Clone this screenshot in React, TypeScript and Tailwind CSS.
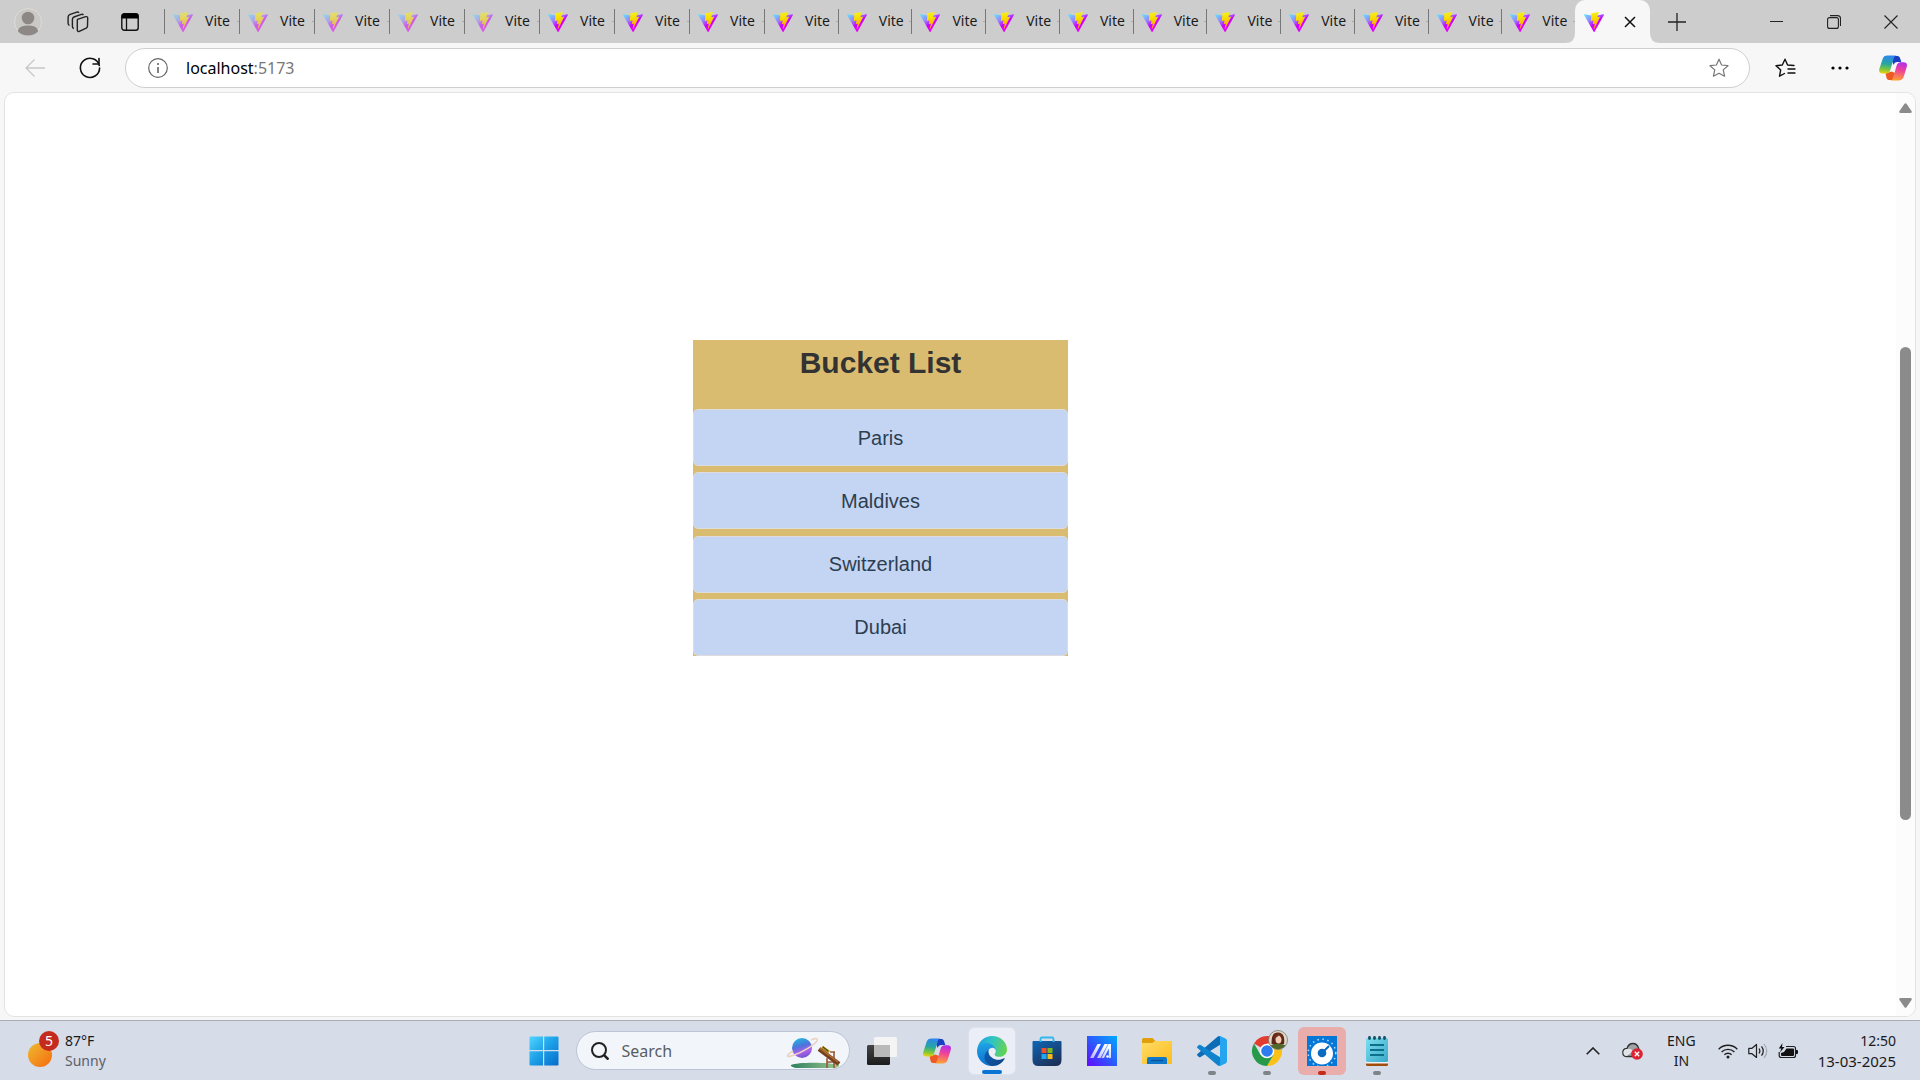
import React from "react";

function ViteLogo({ faded = false }: { faded?: boolean }) {
  return (
    <svg viewBox="0 0 256 257" className={faded ? "size-5 shrink-0 opacity-55" : "size-5 shrink-0"} aria-hidden="true">
      <path fill="url(#viteBase)" d="M255.153 37.938L134.897 252.976c-2.483 4.44-8.862 4.466-11.382.048L.875 37.958c-2.746-4.814 1.371-10.646 6.827-9.67l120.385 21.517a6.537 6.537 0 0 0 2.322-.004l117.867-21.483c5.438-.991 9.574 4.796 6.877 9.62Z" />
      <path fill="url(#viteBolt)" d="M185.432.063L96.44 17.501a3.268 3.268 0 0 0-2.634 3.014l-5.474 92.456a3.268 3.268 0 0 0 3.997 3.378l24.777-5.718c2.318-.535 4.413 1.507 3.936 3.838l-7.361 36.047c-.495 2.426 1.782 4.5 4.151 3.78l15.304-4.649c2.372-.72 4.652 1.36 4.15 3.788l-11.698 56.621c-.732 3.542 3.979 5.473 5.943 2.437l1.313-2.028l72.516-144.72c1.215-2.423-.88-5.186-3.54-4.672l-25.505 4.922c-2.396.462-4.435-1.77-3.759-4.114l16.646-57.705c.677-2.35-1.37-4.583-3.769-4.113Z" />
    </svg>
  );
}

function SharedGradients() {
  return (
    <svg className="absolute size-0" aria-hidden="true">
      <defs>
        <linearGradient id="viteBase" x1="0" x2=".55" y1=".05" y2=".7">
          <stop offset="0" stopColor="#5fe4ff" />
          <stop offset=".5" stopColor="#9a80ff" />
          <stop offset=".85" stopColor="#c800ff" />
          <stop offset="1" stopColor="#e000ff" />
        </linearGradient>
        <linearGradient id="viteBolt" x1=".43" x2=".5" y1=".02" y2=".9">
          <stop offset="0" stopColor="#f6ee20" />
          <stop offset=".4" stopColor="#f7dc00" />
          <stop offset="1" stopColor="#ffa000" />
        </linearGradient>
        <linearGradient id="copA" x1=".3" y1="0" x2=".2" y2="1">
          <stop offset="0" stopColor="#2f86ee" />
          <stop offset=".45" stopColor="#26a7a0" />
          <stop offset=".75" stopColor="#7cc63e" />
          <stop offset="1" stopColor="#f2d20c" />
        </linearGradient>
        <linearGradient id="copB" x1=".7" y1="0" x2=".5" y2="1">
          <stop offset="0" stopColor="#b02df0" />
          <stop offset=".45" stopColor="#ef4498" />
          <stop offset="1" stopColor="#ffa034" />
        </linearGradient>
      </defs>
    </svg>
  );
}

function CopilotLogo() {
  return (
    <svg viewBox="0 0 28 26" className="h-[26px] w-7" aria-hidden="true">
      <path fill="#1b3fc4" d="M13 1h5.500c1.500 0 2.200 1 2.700 2.600L22.300 7h-4c-2 0-3 1-3.600 3L13 6Z" />
      <path fill="#ee5a24" d="M6.500 18.500 7.600 23c.4 1.400 1.300 2 2.900 2H15l1-7-3.500-1.500Z" />
      <path fill="url(#copA)" d="M8.500.5H18c-1.700 0-2.700 1-3.400 3.200L11.300 15c-.8 2.600-2 3.500-4.300 3.500H3.600C.8 18.500-.4 16.700.3 14L3.500 4.200C4.400 1.600 5.800.5 8.500.5Z" />
      <path fill="url(#copB)" d="M19.500 25.500H11c1.700 0 2.500-1 3.200-3.200L17.500 11c.8-2.600 1.900-3.700 4.200-3.700h2.800c2.800 0 4 1.700 3.300 4.500l-3.100 10c-.9 2.600-2.500 3.700-5.200 3.700Z" />
    </svg>
  );
}

function WindowsLogo() {
  return (
    <svg viewBox="0 0 30 30" className="size-[30px]" aria-hidden="true">
      <defs>
        <linearGradient id="winG" x1="0" y1="0" x2="30" y2="30" gradientUnits="userSpaceOnUse">
          <stop offset="0" stopColor="#54d6ff" />
          <stop offset=".45" stopColor="#1fa4ea" />
          <stop offset="1" stopColor="#0369ca" />
        </linearGradient>
      </defs>
      <path fill="url(#winG)" d="M1.500.5H14V14H.5V1.500Q.5.5 1.500.5ZM15.200.5h13.300q1 0 1 1V14H15.200ZM.5 15.200H14v14.300H1.500q-1 0-1-1ZM15.200 15.200h14.300v13.300q0 1-1 1H15.200Z" />
    </svg>
  );
}

function SearchArt() {
  return (
    <svg viewBox="0 0 56 36" className="h-9 w-14" aria-hidden="true">
      <defs>
        <linearGradient id="planetG" x1=".3" y1="0" x2=".6" y2="1">
          <stop offset="0" stopColor="#24b7e0" />
          <stop offset=".4" stopColor="#4c74dc" />
          <stop offset=".7" stopColor="#b060e8" />
          <stop offset="1" stopColor="#6b55d0" />
        </linearGradient>
        <linearGradient id="grassG" x1="0" x2="1">
          <stop offset="0" stopColor="#2f8060" />
          <stop offset="1" stopColor="#9cc890" />
        </linearGradient>
      </defs>
      <path d="M6 32c6-3 38-3 48 0 1 1-2 3-5 3H12c-3 0-7-2-6-3Z" fill="url(#grassG)" />
      <circle cx="17" cy="15" r="10" fill="url(#planetG)" />
      <path d="M8 18C0 23 1 25 9 22c9-3 20-10 23-14 1-3-1-3-6-1" fill="none" stroke="#e9d3c4" strokeWidth="1.600" />
      <path d="M42 25v10M49 19v16M42 29h8M45 19h5" stroke="#9a5938" strokeWidth="1.600" fill="none" />
      <path d="m34 16 20 15" stroke="#744020" strokeWidth="4.600" />
      <path d="m35 15.500 18 13.500" stroke="#b76d31" strokeWidth="1.400" />
      <path d="m37 14 7 5" stroke="#a78b22" strokeWidth="3" />
      <path d="m38 14 5 4" stroke="#493313" strokeWidth="1" />
    </svg>
  );
}

function TaskViewIcon() {
  return (
    <svg viewBox="0 0 30 28" className="h-7 w-[30px]" aria-hidden="true">
      <defs>
        <linearGradient id="tvG" x1="0" y1="0" x2="0" y2="1"><stop stopColor="#444" /><stop offset="1" stopColor="#1c1c1c" /></linearGradient>
      </defs>
      <rect x="0" y="8" width="23" height="20" rx="1.500" fill="url(#tvG)" />
      <rect x="7" y="0" width="23" height="20" rx="1.500" fill="#f4f4f4" />
      <path d="M7 8h16v12H8.500Q7 20 7 18.500Z" fill="#b9b9b9" />
    </svg>
  );
}

function EdgeLogo() {
  return (
    <svg viewBox="0 0 30 30" className="size-[30px]" aria-hidden="true">
      <defs>
        <linearGradient id="edG" x1="0" y1=".3" x2="1" y2=".5">
          <stop stopColor="#1ea0de" /><stop offset=".45" stopColor="#2fc3c8" /><stop offset="1" stopColor="#66d34f" />
        </linearGradient>
        <linearGradient id="edB" x1=".4" y1="0" x2=".5" y2="1"><stop stopColor="#1ea3e4" /><stop offset="1" stopColor="#0b6fd0" /></linearGradient>
        <linearGradient id="edN" x1="0" y1="0" x2="1" y2=".6"><stop stopColor="#0a5fb4" /><stop offset="1" stopColor="#11458a" /></linearGradient>
      </defs>
      <path fill="url(#edG)" d="M.4 12.200C1.800 5 7.700 0 15 0c8.500 0 15 6.300 15 13.500 0 4.300-3.100 7.300-7.400 7.300-3 0-5-1.200-5-2.400 0-.9 1.200-1.300 1.200-3.400 0-3.300-4-6.600-9-6.600C5.500 8.400 1.800 10 .4 12.200Z" />
      <path fill="url(#edB)" d="M0 15C0 9.900 4 7 9.700 7c5 0 9.100 4 9.100 8 0-1.800-2-3.800-4.500-3-3.300 1-6.200 4.700-6.200 9.300 0 4 2.300 7 5.700 8.600C6 29.500 0 23 0 15Z" />
      <path fill="url(#edN)" d="M12.200 12.900c-.6 1-.9 2.300-.6 3.800.8 4.300 5.400 7 9.700 7 2.500 0 4-.7 5.800-1.500.5-.2.800.2.500.7A15 15 0 0 1 13.800 30C10 28.500 7.400 25.300 7.400 21.300c0-3.700 2-6.700 4.800-8.400Z" />
    </svg>
  );
}

function StoreLogo() {
  return (
    <svg viewBox="0 0 30 30" className="size-[30px]" aria-hidden="true">
      <defs>
        <linearGradient id="stG" x1=".2" y1="0" x2=".8" y2="1"><stop stopColor="#0f62ae" /><stop offset="1" stopColor="#1d2f55" /></linearGradient>
      </defs>
      <path d="M8.500 7V3q0-1.500 1.500-1.500h10q1.500 0 1.500 1.500v4" fill="none" stroke="#2fb9ee" strokeWidth="1.800" />
      <path d="M1.500 5h27q1 0 1 1v18q0 6-6 6h-17q-6 0-6-6V6q0-1 1-1Z" fill="url(#stG)" />
      <path d="M8.500 6V4.500M21.500 6V4.500" stroke="#2fb9ee" strokeWidth="1.800" />
      <path fill="#f2502a" d="M9.500 12h5v5h-5z" /><path fill="#7fba1c" d="M15.500 12h5v5h-5z" />
      <path fill="#22a8ef" d="M9.500 18h5v5h-5z" /><path fill="#fdb913" d="M15.500 18h5v5h-5z" />
    </svg>
  );
}

function AsusLogo() {
  return (
    <svg viewBox="0 0 30 30" className="size-[30px]" aria-hidden="true">
      <defs>
        <linearGradient id="asG" x1="0" y1="1" x2="1" y2="0"><stop stopColor="#6408ff" /><stop offset=".5" stopColor="#2b5bff" /><stop offset="1" stopColor="#00aaff" /></linearGradient>
        <linearGradient id="asW" x1="0" y1="1" x2=".5" y2="0"><stop stopColor="#b7b4ff" /><stop offset="1" stopColor="#fff" /></linearGradient>
      </defs>
      <path fill="url(#asG)" d="M0 0h30v30H0z" />
      <path fill="url(#asW)" d="M10.500 8H14L6.500 22H3ZM17.500 8H21l-7.500 14H10ZM21.500 8H24v14h-2.200V12.500L17 22h-2.600Z" />
      <circle cx="20.500" cy="20.500" r="1.300" fill="#fff" />
    </svg>
  );
}

function ExplorerLogo() {
  return (
    <svg viewBox="0 0 30 28" className="h-7 w-[30px]" aria-hidden="true">
      <defs>
        <linearGradient id="fxG" x1="0" y1="0" x2="1" y2="1"><stop stopColor="#ffdc68" /><stop offset="1" stopColor="#fcbc1c" /></linearGradient>
      </defs>
      <path fill="#e0a00c" d="M1.500 1h9l3 3H29q1 0 1 1v6H0V2.500Q0 1 1.500 1Z" />
      <path fill="url(#fxG)" d="M0 6h10.500l2.500-2h16q1 0 1 1v21q0 1-1 1H1q-1 0-1-1Z" />
      <path fill="#0f78cb" d="M7 20h16q2 0 2 2v5H5v-5q0-2 2-2Z" />
      <path d="M9 23.500h12" stroke="#0a4f96" strokeWidth="1.200" />
    </svg>
  );
}

function CodeLogo() {
  return (
    <svg viewBox="0 0 30 30" className="size-[30px]" aria-hidden="true">
      <path fill="#0c6cb5" d="M1.900 20.900.4 19.500q-.8-.8 0-1.600L20.500.8c.8-.8 2-1 3-.4v8.200L3.600 21q-.9.600-1.700-.1Z" />
      <path fill="#0f83cd" d="M1.900 9.100.4 10.500q-.8.800 0 1.600l20.100 17.100c.8.800 2 1 3 .4v-8.200L3.600 9q-.9-.6-1.700.1Z" />
      <path fill="#25a4f0" d="M23.600 29.800c-1 .4-2.300.2-3.100-.6 1 1 2.500.3 2.500-1.200V2c0-1.500-1.500-2.200-2.500-1.200.8-.8 2.100-1 3.100-.6l4.900 2.400q1.500.7 1.500 2.400v20q0 1.700-1.500 2.400Z" />
    </svg>
  );
}

function ChromeLogo() {
  return (
    <svg viewBox="0 6 30 30" className="size-[30px] overflow-visible" aria-hidden="true">
      <path fill="#e33b2e" d="M15 21 2 13.500A15 15 0 0 1 28 13.500H15Z" />
      <path fill="#fbc116" d="M15 21V13.500H28A15 15 0 0 1 15 36l6.500-11.300Z" />
      <path fill="#269a48" d="m15 21 6.500 3.700L15 36A15 15 0 0 1 2 13.500l6.500 11.200Z" />
      <circle cx="15" cy="21" r="7.300" fill="#fff" />
      <circle cx="15" cy="21" r="5.800" fill="#2d7cf0" />
      <circle cx="26" cy="10" r="9.500" fill="#e4d8c5" stroke="#777" strokeWidth=".8" />
      <path fill="#5b271a" d="M19.500 14c0-7 1-11.500 6.500-11.500S33 8 32 14l-6 2Z" />
      <ellipse cx="26.500" cy="9.500" rx="3" ry="4" fill="#f3cdb3" />
      <path d="M22.500 8c2-.5 3.500-1.500 4.500-3l3 4-.5-5-4-1-3 2Z" fill="#6e301e" />
      <path fill="#52682a" d="M18.500 15.500c3-1.500 4.500-1.500 7.500-1.500s5 0 7.500 1.500a9.500 9.500 0 0 1-15 0Z" />
    </svg>
  );
}

function GaugeLogo() {
  return (
    <svg viewBox="0 0 30 30" className="size-[30px]" aria-hidden="true">
      <path fill="#0578d7" d="M0 0h30v30H0z" />
      <circle cx="15" cy="17" r="13.800" fill="none" stroke="#b9dcf8" strokeWidth="1.500" strokeDasharray="1.500 3.500" />
      <circle cx="15" cy="17.500" r="11" fill="#fff" />
      <circle cx="15" cy="17" r="4.300" fill="#0b6bc0" />
      <path d="m15 17 7-7" stroke="#0b6bc0" strokeWidth="2" />
    </svg>
  );
}

function NotepadLogo() {
  return (
    <svg viewBox="0 0 22 30" className="h-[30px] w-[22px]" aria-hidden="true">
      <defs>
        <linearGradient id="npG" x1="0" y1="0" x2="1" y2="1"><stop stopColor="#7be0f0" /><stop offset="1" stopColor="#3aa8c8" /></linearGradient>
      </defs>
      <path fill="#f2f2f2" d="M0 24h22v4H0z" /><path fill="#a04c0c" d="M0 27.500h22v1q0 1.500-1.500 1.500h-19Q0 30 0 28.500Z" />
      <rect y="2" width="22" height="24" rx="1.500" fill="url(#npG)" />
      <path d="M4 9h14M4 14h14M4 19h14" stroke="#0e6f8c" strokeWidth="1.800" />
      <path d="M3.500 1.500v1M8.500 1.500v1M13.500 1.500v1M18.500 1.500v1" stroke="#154f63" strokeWidth="2.800" strokeLinecap="round" />
    </svg>
  );
}

type TabProps = { faded?: boolean; className: string };

function Tab({ faded, className }: TabProps) {
  return (
    <button type="button" className={`flex h-full items-center text-left ${className}`}>
      <span className="h-[25px] w-px shrink-0 bg-[#777]" />
      <span className="ml-2 flex">
        <ViteLogo faded={faded} />
      </span>
      <span className="ml-3 pb-0.5 text-sm text-[#1a1a1a]">Vite</span>
      <span className="ml-auto h-px w-0.5 bg-[#aaa]" />
    </button>
  );
}

function TabStrip() {
  return (
    <header className="flex h-[43px] items-center bg-[#cdcdcd]">
      <div className="flex h-full w-[164px] shrink-0 items-center">
        <button type="button" aria-label="Profile" className="ml-3.5">
          <svg viewBox="0 0 28 28" className="size-7">
            <circle cx="14" cy="14" r="13.500" fill="#cbc9c6" stroke="#dedcd8" />
            <circle cx="14" cy="10" r="6.300" fill="#8d8885" />
            <path fill="#8d8885" d="M4 23.500c0-4 4-6 10-6s10 2 10 6A13.500 13.500 0 0 1 14 27.500 13.500 13.500 0 0 1 4 23.500Z" />
          </svg>
        </button>
        <button type="button" aria-label="Workspaces" className="ml-[25px]">
          <svg viewBox="0 0 22 22" className="size-[22px]" fill="none" stroke="#222" strokeWidth="1.400" strokeLinejoin="round">
            <path d="M10.500 8.300 18.700 5.700q1.800-.5 2 1.200l-.2 8.300q-.2 1.300-1.300 1.900l-6.900 3.300q-1.700.6-2-1.200V10.200q0-1.400.2-1.900Z" />
            <path d="M6.800 17.500q-1.300-.5-1.400-2V8.300q.1-1.600 1.500-2.300l7.500-2.600q1.300-.4 2 .6" />
            <path d="M2.500 14.500q-1.300-.7-1.400-2V6q.1-1.600 1.500-2.300L9.800 1.100q1.300-.4 2.200.6" />
          </svg>
        </button>
        <button type="button" aria-label="Tab actions" className="ml-8">
          <svg viewBox="0 0 18 18" className="size-[18px]">
            <rect x=".8" y=".8" width="16.400" height="16.400" rx="2.500" fill="none" stroke="#111" strokeWidth="1.400" />
            <path fill="#000" d="M.5 5.500V3Q.5.500 3 .5h12q2.500 0 2.500 2.500v2.500Z" /><path d="M5.500 5v12" stroke="#111" strokeWidth="1.300" />
          </svg>
        </button>
      </div>
      <div className="flex h-full shrink-0">
        {Array.from({ length: 8 }, (_, i) => (
          <Tab key={i} faded={i < 5} className="w-[75px]" />
        ))}
      </div>
      <div className="flex h-full w-[811px] shrink-0">
        {Array.from({ length: 11 }, (_, i) => (
          <Tab key={i} className="flex-1" />
        ))}
      </div>
      <div className="relative flex h-full w-[75px] shrink-0 items-center rounded-t-[10px] bg-[#f7f7f7]">
        <svg viewBox="0 0 10 10" className="absolute bottom-0 -left-2.5 size-2.5" aria-hidden="true"><path fill="#f7f7f7" d="M10 0v10H0Q10 10 10 0Z" /></svg>
        <svg viewBox="0 0 10 10" className="absolute -right-2.5 bottom-0 size-2.5" aria-hidden="true"><path fill="#f7f7f7" d="M0 0v10h10Q0 10 0 0Z" /></svg>
        <span className="ml-[9px]"><ViteLogo /></span>
        <button type="button" aria-label="Close tab" className="ml-5">
          <svg viewBox="0 0 12 12" className="size-3"><path d="m1 1 10 10M11 1 1 11" stroke="#111" strokeWidth="1.500" /></svg>
        </button>
      </div>
      <button type="button" aria-label="New tab" className="ml-[18px]">
        <svg viewBox="0 0 18 18" className="size-[18px]"><path d="M9 0v18M0 9h18" stroke="#222" strokeWidth="1.300" /></svg>
      </button>
      <div className="ml-auto flex h-full shrink-0 pr-px">
        <button type="button" aria-label="Minimize" className="flex w-[57px] items-center justify-center">
          <svg viewBox="0 0 13 13" className="size-[13px]"><path d="M0 6.500h13" stroke="#222" /></svg>
        </button>
        <button type="button" aria-label="Restore" className="flex w-[57px] items-center justify-center">
          <svg viewBox="0 0 14 14" className="size-3.5" fill="none" stroke="#222" strokeWidth="1.100"><rect x=".6" y="2.600" width="10.800" height="10.800" rx="2" /><path d="M3 .6h7.500q3 0 3 3V11" /></svg>
        </button>
        <button type="button" aria-label="Close" className="flex w-[57px] items-center justify-center">
          <svg viewBox="0 0 14 14" className="size-3.5"><path d="m.5.5 13 13M13.500.5l-13 13" stroke="#222" strokeWidth="1.100" /></svg>
        </button>
      </div>
    </header>
  );
}

const STAR = "M10 1.200 12.600 7l6.400.7-4.800 4.200 1.400 6.300L10 15.200 4.400 18.200l1.400-6.300L1 7.700 7.400 7Z";

function Toolbar() {
  return (
    <nav className="flex h-[49px] items-center bg-[#f7f7f7] pr-[13px] pl-[25px]">
      <button type="button" aria-label="Back">
        <svg viewBox="0 0 20 18" className="h-[18px] w-5" fill="none" stroke="#c8c8c8" strokeWidth="1.300"><path d="M20 9H1M9.500.5 1 9l8.500 8.500" /></svg>
      </button>
      <button type="button" aria-label="Refresh" className="ml-[34px]">
        <svg viewBox="0 0 22 22" className="size-[22px]" fill="none" stroke="#111" strokeWidth="1.600"><path d="M20.300 8.500A9.600 9.600 0 1 0 20.600 11" strokeLinecap="round" /><path d="M20 1.500V7h-6" strokeLinejoin="round" strokeLinecap="round" /></svg>
      </button>
      <label className="ml-6 flex h-10 min-w-0 flex-1 items-center rounded-full border border-[#cfcfcf] bg-white pr-5 pl-[22px]">
        <svg viewBox="0 0 20 20" className="size-5 shrink-0" fill="none" stroke="#666" strokeWidth="1.200" aria-hidden="true"><circle cx="10" cy="10" r="9.300" /><path d="M10 9v6M10 5v2" strokeWidth="1.600" /></svg>
        <span className="relative ml-[18px] flex-1 text-base">
          <span aria-hidden="true" className="text-black">localhost<span className="text-[#777]">:5173</span></span>
          <input aria-label="Address" defaultValue="localhost:5173" className="absolute inset-0 w-full bg-transparent text-transparent outline-none" />
        </span>
        <button type="button" aria-label="Add to favorites">
          <svg viewBox="0 0 20 20" className="size-5" fill="none" stroke="#777" strokeWidth="1.200" strokeLinejoin="round"><path d={STAR} /></svg>
        </button>
      </label>
      <button type="button" aria-label="Favorites" className="ml-[25px]">
        <svg viewBox="0 0 21 20" className="h-5 w-[21px]" fill="none" stroke="#111" strokeWidth="1.400" strokeLinejoin="round" strokeLinecap="round">
          <path d="m9.500 15.500-5 2.700 1.200-6.300L1 7.700 7.300 7 10 1.200 12.600 7M12.600 7 19 7.500M13 11h7M13 15h7" />
        </svg>
      </button>
      <button type="button" aria-label="More" className="ml-[35px]">
        <svg viewBox="0 0 18 4" className="h-1 w-[18px]"><circle cx="2" cy="2" r="1.600" /><circle cx="9" cy="2" r="1.600" /><circle cx="16" cy="2" r="1.600" /></svg>
      </button>
      <button type="button" aria-label="Copilot" className="ml-[30px]"><CopilotLogo /></button>
    </nav>
  );
}

const PLACES = ["Paris", "Maldives", "Switzerland", "Dubai"];

function Page() {
  return (
    <main className="mx-1 mb-[3px] flex min-h-0 flex-1 overflow-hidden rounded-[10px] border border-[#e3e3e3] bg-white font-['Liberation_Sans',sans-serif]">
      <div className="flex-1 pt-[247px] pl-[688px]">
        <section className="w-[375px] bg-[#d9bc70] text-center">
          <h1 className="pt-1 pb-7 text-[30px] leading-[37px] font-bold text-[#333]">Bucket List</h1>
          <ul className="flex h-[247px] flex-col justify-between">
            {PLACES.map((place) => (
              <li key={place} className="flex h-[57px] items-center justify-center rounded-[5px] border border-[#ddd] bg-[#c4d4f3] text-xl text-[#2c3e50]">
                {place}
              </li>
            ))}
          </ul>
        </section>
      </div>
      <div className="flex w-[19px] flex-col items-center bg-[#fcfcfc] pt-2.5 pb-2" aria-hidden="true">
        <svg viewBox="0 0 13 10" className="h-2.5 w-[13px]"><path fill="#8b8b8b" d="M5.500.7q1-1 2 0L12.500 8q.8 2-1 2h-10q-1.800 0-1-2Z" /></svg>
        <div className="w-[11px] flex-1 pt-[234px] pb-[178px]">
          <div className="h-full rounded-full bg-[#8b8b8b]" />
        </div>
        <svg viewBox="0 0 13 10" className="h-2.5 w-[13px]"><path fill="#8b8b8b" d="M5.500 9.300q1 1 2 0L12.500 2q.8-2-1-2h-10q-1.800 0-1 2Z" /></svg>
      </div>
    </main>
  );
}

type AppButtonProps = { label: string; tile?: string; mark?: string; children: React.ReactNode };

function AppButton({ label, tile = "", mark, children }: AppButtonProps) {
  return (
    <button type="button" aria-label={label} className={`relative flex size-12 items-center justify-center rounded-md ${tile}`}>
      {children}
      {mark && <span className={`absolute bottom-0 h-1 rounded-full ${mark}`} />}
    </button>
  );
}

function Taskbar() {
  return (
    <footer className="grid h-[60px] grid-cols-[1fr_auto_1fr] items-center border-t border-[#a9adb5] bg-[#d6dce8]">
      <button type="button" className="flex items-center pl-7 text-left">
        <span className="relative mr-1.5 block h-10 w-[31px]">
          <span className="absolute bottom-1 left-0 size-6 rounded-full bg-linear-to-br from-[#edb92f] to-[#f3680c]" />
          <span className="absolute top-0 right-0 flex size-5 items-center justify-center rounded-full bg-[#c42b1c] text-sm leading-5 text-white">5</span>
        </span>
        <span className="text-sm leading-5">
          <span className="block text-[#1a1a1a]">87°F</span>
          <span className="block text-[#5c6068]">Sunny</span>
        </span>
      </button>
      <div className="flex items-center">
        <AppButton label="Start"><WindowsLogo /></AppButton>
        <label className="mx-2 flex h-[39px] w-[274px] items-center rounded-full border border-[#bcc3d4] bg-[#f2f5fa] pr-2 pl-3.5">
          <svg viewBox="0 0 18 18" className="size-[18px] shrink-0" fill="none" stroke="#222" strokeWidth="2" aria-hidden="true"><circle cx="8" cy="8" r="7" /><path d="m12.800 12.800 4.700 4.700" strokeWidth="2.600" /></svg>
          <input aria-label="Search" placeholder="Search" className="ml-[13px] min-w-0 flex-1 bg-transparent text-base outline-none placeholder:text-[#5a5d63]" />
          <SearchArt />
        </label>
        <div className="flex items-center gap-[7px]">
          <AppButton label="Task view"><TaskViewIcon /></AppButton>
          <AppButton label="Copilot app"><CopilotLogo /></AppButton>
          <AppButton label="Microsoft Edge" tile="border border-[#dde1ea] bg-[#ebeef6]" mark="w-5 bg-[#0a74d4]"><EdgeLogo /></AppButton>
          <AppButton label="Microsoft Store"><StoreLogo /></AppButton>
          <AppButton label="MyASUS"><AsusLogo /></AppButton>
          <AppButton label="File Explorer"><ExplorerLogo /></AppButton>
          <AppButton label="Visual Studio Code" mark="w-2 bg-[#808489]"><CodeLogo /></AppButton>
          <AppButton label="Google Chrome" mark="w-2 bg-[#808489]"><ChromeLogo /></AppButton>
          <AppButton label="Monitor" tile="bg-[#e9aeab]" mark="w-2 bg-[#c42b1c]"><GaugeLogo /></AppButton>
          <AppButton label="Notepad" mark="w-2 bg-[#808489]"><NotepadLogo /></AppButton>
        </div>
      </div>
      <div className="flex items-center justify-end pr-6 text-[#1a1a1a]">
        <button type="button" aria-label="Show hidden icons">
          <svg viewBox="0 0 14 8" className="h-2 w-3.5" fill="none" stroke="#222" strokeWidth="1.600"><path d="m.7 7.300 6.300-6.300 6.300 6.300" /></svg>
        </button>
        <button type="button" aria-label="OneDrive" className="ml-[22px]">
          <svg viewBox="0 0 21 18" className="h-[18px] w-[21px]">
            <path d="M5 14.500Q.8 14.500.8 10.500T5 6.500Q6.500 1.500 11 1.500q4 0 5.500 4.500l1 3-5 5.500Z" fill="#9fa3a8" stroke="#333" strokeWidth="1.300" />
            <path d="M5 7q4-1 6 2l-6 5Q1.500 14 1.500 10.500T5 7Z" fill="#e3e4e6" />
            <circle cx="15" cy="12" r="5.800" fill="#dc2132" /><path d="m12.800 9.800 4.400 4.400m0-4.400-4.400 4.400" stroke="#fff" strokeWidth="1.300" />
          </svg>
        </button>
        <button type="button" className="ml-6 text-center text-sm leading-5">
          <span className="block">ENG</span>
          <span className="block">IN</span>
        </button>
        <button type="button" aria-label="Network, volume and battery" className="ml-[22px] flex items-center gap-2.5">
          <svg viewBox="0 0 20 16" className="h-4 w-5" fill="none" stroke="#1f1f1f" strokeWidth="1.400"><path d="M.7 6.200a13 13 0 0 1 18.600 0M3.600 9a9 9 0 0 1 12.800 0M6.400 11.700a5.100 5.100 0 0 1 7.200 0" /><circle cx="10" cy="14" r="1.500" fill="#1f1f1f" stroke="none" /></svg>
          <svg viewBox="0 0 20 16" className="h-4 w-5" fill="none" stroke="#1f1f1f" strokeWidth="1.200"><path d="M.8 5.300H4L8.500 1.500v13L4 10.700H.8Z" strokeLinejoin="round" /><path d="M11 5.500q1.800 2.500 0 5M13.500 3.300q3.500 4.700 0 9.400" /><path d="M16 1q5.500 7 0 14" stroke="#a3a7b0" /></svg>
          <svg viewBox="0 0 20 16" className="h-4 w-5"><path d="M8 3.500h7.500q2 0 2 2v7q0 2-2 2H3.200q-2 0-2-2V9" fill="none" stroke="#1f1f1f" strokeWidth="1.200" /><path d="M8.500 5.500H15q1 0 1 1V12q0 1-1 1H4q-1 0-1-1v-2l3-1Z" fill="#111" /><path d="M18 7h1q1 0 1 1v2q0 1-1 1h-1ZM4.500 0 .8 5.500h2.500L2 9.500l4.500-5.500H4Z" fill="#111" /></svg>
        </button>
        <button type="button" className="ml-5 text-right leading-5">
          <span className="block text-sm leading-5">12:50</span>
          <span className="block text-[15px] leading-5">13-03-2025</span>
        </button>
      </div>
    </footer>
  );
}

export default function App() {
  return (
    <div className="flex h-screen flex-col overflow-hidden bg-[#f7f7f7] font-['Noto_Sans',sans-serif]">
      <SharedGradients />
      <TabStrip />
      <Toolbar />
      <Page />
      <Taskbar />
    </div>
  );
}
